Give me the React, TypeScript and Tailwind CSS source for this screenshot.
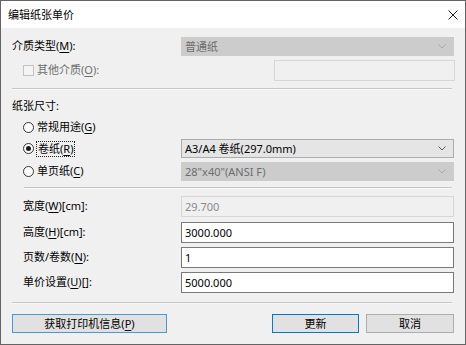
import React from "react";

const U = ({ c }: { c: string }) => <span className="underline underline-offset-[2px] decoration-[1px]">{c}</span>;

const Chevron = ({ disabled }: { disabled?: boolean }) => (
  <svg width="8" height="5" viewBox="0 0 8 5" className="shrink-0">
    <polyline points="0.5,0.5 4,4 7.5,0.5" fill="none" stroke={disabled ? "#a8a8a8" : "#5a5a5a"} strokeWidth="1" />
  </svg>
);

const Combo = ({ text, disabled, className = "" }: { text: string; disabled?: boolean; className?: string }) => (
  <div
    className={`flex h-[19px] items-center justify-between border pl-[3px] pr-[7px] ${
      disabled ? "border-[#cccccc] bg-[#cccccc] text-[#6d6d6d]" : "border-[#adadad] bg-[#e5e5e5] text-black"
    } ${className}`}
  >
    <span className="leading-none">{text}</span>
    <Chevron disabled={disabled} />
  </div>
);

const Field = ({ text, disabled, className = "" }: { text: string; disabled?: boolean; className?: string }) => (
  <div
    className={`flex h-[21px] items-center border pl-[3px] ${
      disabled ? "border-[#d7d7d7] bg-[#f0f0f0] text-[#8a8a8a]" : "border-[#7a7a7a] bg-white text-black"
    } ${className}`}
  >
    <span className="leading-none">{text}</span>
  </div>
);

const Radio = ({ checked }: { checked?: boolean }) => (
  <div className="flex h-[11px] w-[11px] shrink-0 items-center justify-center rounded-full border border-[#333333] bg-white">
    {checked && <div className="h-[5px] w-[5px] rounded-full bg-[#1a1a1a]" />}
  </div>
);

const Sep = ({ className = "" }: { className?: string }) => (
  <div className={`h-[2px] border-t border-[#c6c6c6] bg-[#f8f8f8] ${className}`} />
);

export default function App() {
  return (
    <div className="flex h-[345px] w-[466px] flex-col border border-[#646464] bg-[#f0f0f0] text-[11px] text-black [font-family:'Noto_Sans','Noto_Sans_CJK_SC',sans-serif]">
      {/* title bar */}
      <div className="flex h-[27px] shrink-0 items-center justify-between bg-white pl-[7px] pr-[7px]">
        <span className="text-[11px] leading-none">编辑纸张单价</span>
        <svg width="10" height="10" viewBox="0 0 10 10">
          <path d="M0.5 0.5 L9.5 9.5 M9.5 0.5 L0.5 9.5" stroke="#222" strokeWidth="1" />
        </svg>
      </div>

      <div className="flex flex-col px-[11px]">
        {/* media type */}
        <div className="mt-[9px] flex h-[19px] items-center">
          <div className="w-[169px] shrink-0">
            介质类型(<U c="M" />):
          </div>
          <Combo text="普通纸" disabled className="flex-1" />
        </div>

        {/* other media */}
        <div className="mt-[4px] flex h-[21px] items-center">
          <div className="ml-[11px] flex items-center text-[#6d6d6d]">
            <div className="h-[11px] w-[11px] border border-[#c2c2c2] bg-[#f4f4f4]" />
            <span className="ml-[3px]">
              其他介质(<U c="O" />):
            </span>
          </div>
          <Field text="" disabled className="-mr-px ml-auto w-[181px]" />
        </div>

        <Sep className="mt-[7px] mr-[2px]" />

        <div className="mt-[8px] flex h-[16px] items-center">纸张尺寸:</div>

        <div className="mt-[4px] flex h-[19px] items-center pl-[11px]">
          <Radio />
          <span className="ml-[3px]">
            常规用途(<U c="G" />)
          </span>
        </div>

        <div className="mt-[2px] flex h-[19px] items-center pl-[11px]">
          <div className="flex w-[158px] shrink-0 items-center">
            <Radio checked />
            <span className="ml-[2px] border border-dotted border-[#222] px-px leading-[14px]">
              卷纸(<U c="R" />)
            </span>
          </div>
          <Combo text="A3/A4 卷纸(297.0mm)" className="flex-1" />
        </div>

        <div className="mt-[4px] flex h-[19px] items-center pl-[11px]">
          <div className="flex w-[158px] shrink-0 items-center">
            <Radio />
            <span className="ml-[3px]">
              单页纸(<U c="C" />)
            </span>
          </div>
          <Combo text={'28"x40"(ANSI F)'} disabled className="flex-1" />
        </div>

        <Sep className="mt-[6px] ml-[12px] mr-[2px]" />

        <div className="mt-[7px] flex h-[21px] items-center pl-[11px]">
          <div className="w-[158px] shrink-0">
            宽度(<U c="W" />)[cm]:
          </div>
          <Field text="29.700" disabled className="flex-1" />
        </div>
        <div className="mt-[5px] flex h-[21px] items-center pl-[11px]">
          <div className="w-[158px] shrink-0">
            高度(<U c="H" />)[cm]:
          </div>
          <Field text="3000.000" className="flex-1" />
        </div>
        <div className="mt-[4px] flex h-[21px] items-center pl-[11px]">
          <div className="w-[158px] shrink-0">
            页数/卷数(<U c="N" />):
          </div>
          <Field text="1" className="flex-1" />
        </div>
        <div className="mt-[4px] flex h-[21px] items-center pl-[11px]">
          <div className="w-[158px] shrink-0">
            单价设置(<U c="U" />)[]:
          </div>
          <Field text="5000.000" className="flex-1" />
        </div>

        <Sep className="mt-[9px] mr-[2px]" />

        <div className="mt-[10px] flex h-[19px] items-stretch">
          <button className="flex w-[155px] items-center justify-center border border-[#4a97e0] bg-[#e1e1e1] leading-none">
            获取打印机信息(<U c="P" />)
          </button>
          <div className="flex-1" />
          <button className="flex w-[87px] items-center justify-center border border-[#0078d7] bg-[#e1e1e1] leading-none">
            更新
          </button>
          <button className="ml-[7px] flex w-[88px] items-center justify-center border border-[#adadad] bg-[#e1e1e1] leading-none">
            取消
          </button>
        </div>
      </div>
    </div>
  );
}
